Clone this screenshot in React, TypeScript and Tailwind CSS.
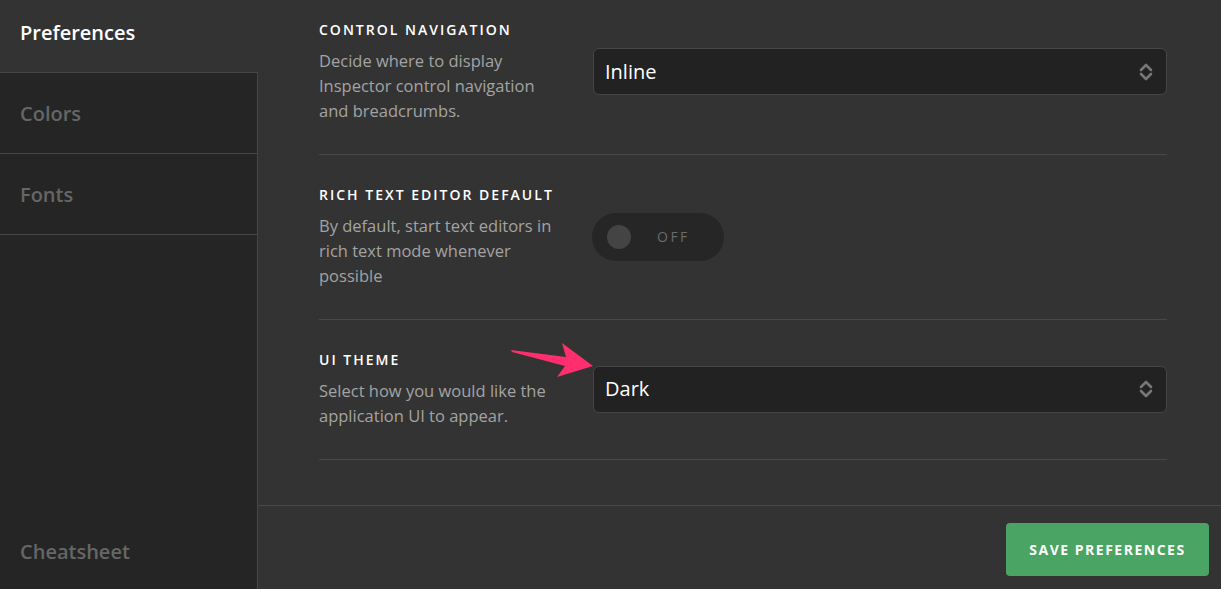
import React from 'react';

const font = { fontFamily: '"Open Sans", "Liberation Sans", sans-serif' };

const Chevrons = () => (
  <svg width="16" height="22" viewBox="0 0 16 22" fill="none" stroke="#777777" strokeWidth="2.6" strokeLinecap="round" strokeLinejoin="round">
    <path d="M3 9 L8 4 L13 9" />
    <path d="M3 13 L8 18 L13 13" />
  </svg>
);

const Select = ({ value }: { value: string }) => (
  <div className="flex-1 h-[47px] flex items-center justify-between pl-[11px] pr-[12px] bg-[#222222] border border-[#464646] rounded-md">
    <span className="text-[20px] text-white">{value}</span>
    <Chevrons />
  </div>
);

const Section = ({
  title,
  desc,
  children,
  first,
}: {
  title: string;
  desc: string;
  children: React.ReactNode;
  first?: boolean;
}) => (
  <div className={`flex items-center border-b border-[#484848] ${first ? 'pt-[20px]' : 'pt-[30px]'} pb-[31px]`}>
    <div className="w-[274px] shrink-0">
      <h3 className="text-[14px] font-semibold tracking-[2px] leading-5 text-white">{title}</h3>
      <p className="mt-[8px] w-[245px] text-[16.5px] leading-[25px] text-[#a3a3a3]">{desc}</p>
    </div>
    {children}
  </div>
);

export default function App() {
  return (
    <div className="relative flex h-[589px] w-full overflow-hidden bg-[#333333]" style={font}>
      {/* Sidebar */}
      <aside className="w-[258px] shrink-0 flex flex-col">
        <div className="h-[72px] px-5 pb-[6px] flex items-center text-[20px] font-semibold text-white">Preferences</div>
        <div className="flex-1 flex flex-col bg-[#252525] border-t border-r border-[#464646]">
          {['Colors', 'Fonts'].map((t) => (
            <div key={t} className="h-[81px] px-5 pt-[2px] flex items-center border-b border-[#464646] text-[20px] font-semibold text-[#666666]">
              {t}
            </div>
          ))}
          <div className="flex-1" />
          <div className="h-[84px] px-5 flex items-center pt-[10px] text-[20px] font-semibold text-[#666666]">Cheatsheet</div>
        </div>
      </aside>

      {/* Main */}
      <main className="flex-1 flex flex-col">
        <div className="flex-1 pl-[61px] pr-[54px]">
          <Section first title="CONTROL NAVIGATION" desc="Decide where to display Inspector control navigation and breadcrumbs.">
            <Select value="Inline" />
          </Section>
          <Section title="RICH TEXT EDITOR DEFAULT" desc="By default, start text editors in rich text mode whenever possible">
            <div className="ml-[-1px] w-[132px] h-[48px] rounded-full bg-[#262626] flex items-center pl-[15px]">
              <div className="w-6 h-6 rounded-full bg-[#444444]" />
              <span className="ml-[26px] text-[14px] tracking-[2.5px] text-[#6a6a6a]">OFF</span>
            </div>
          </Section>
          <Section title="UI THEME" desc="Select how you would like the application UI to appear.">
            <Select value="Dark" />
          </Section>
        </div>
        <footer className="h-[84px] shrink-0 border-t border-[#484848] flex items-center justify-end pr-3 pt-[3px]">
          <button className="w-[203px] h-[53px] rounded bg-[#4aa463] text-white text-[14px] font-bold tracking-[1.5px]">
            SAVE PREFERENCES
          </button>
        </footer>
      </main>

      {/* Annotation arrow */}
      <svg className="absolute left-[505px] top-[336px]" width="95" height="46" viewBox="505 336 95 46">
        <polygon
          fill="#ff2e6e"
          points="511,350 566,357 562,343 593,366 557,377 565,366 512,352"
        />
      </svg>
    </div>
  );
}
